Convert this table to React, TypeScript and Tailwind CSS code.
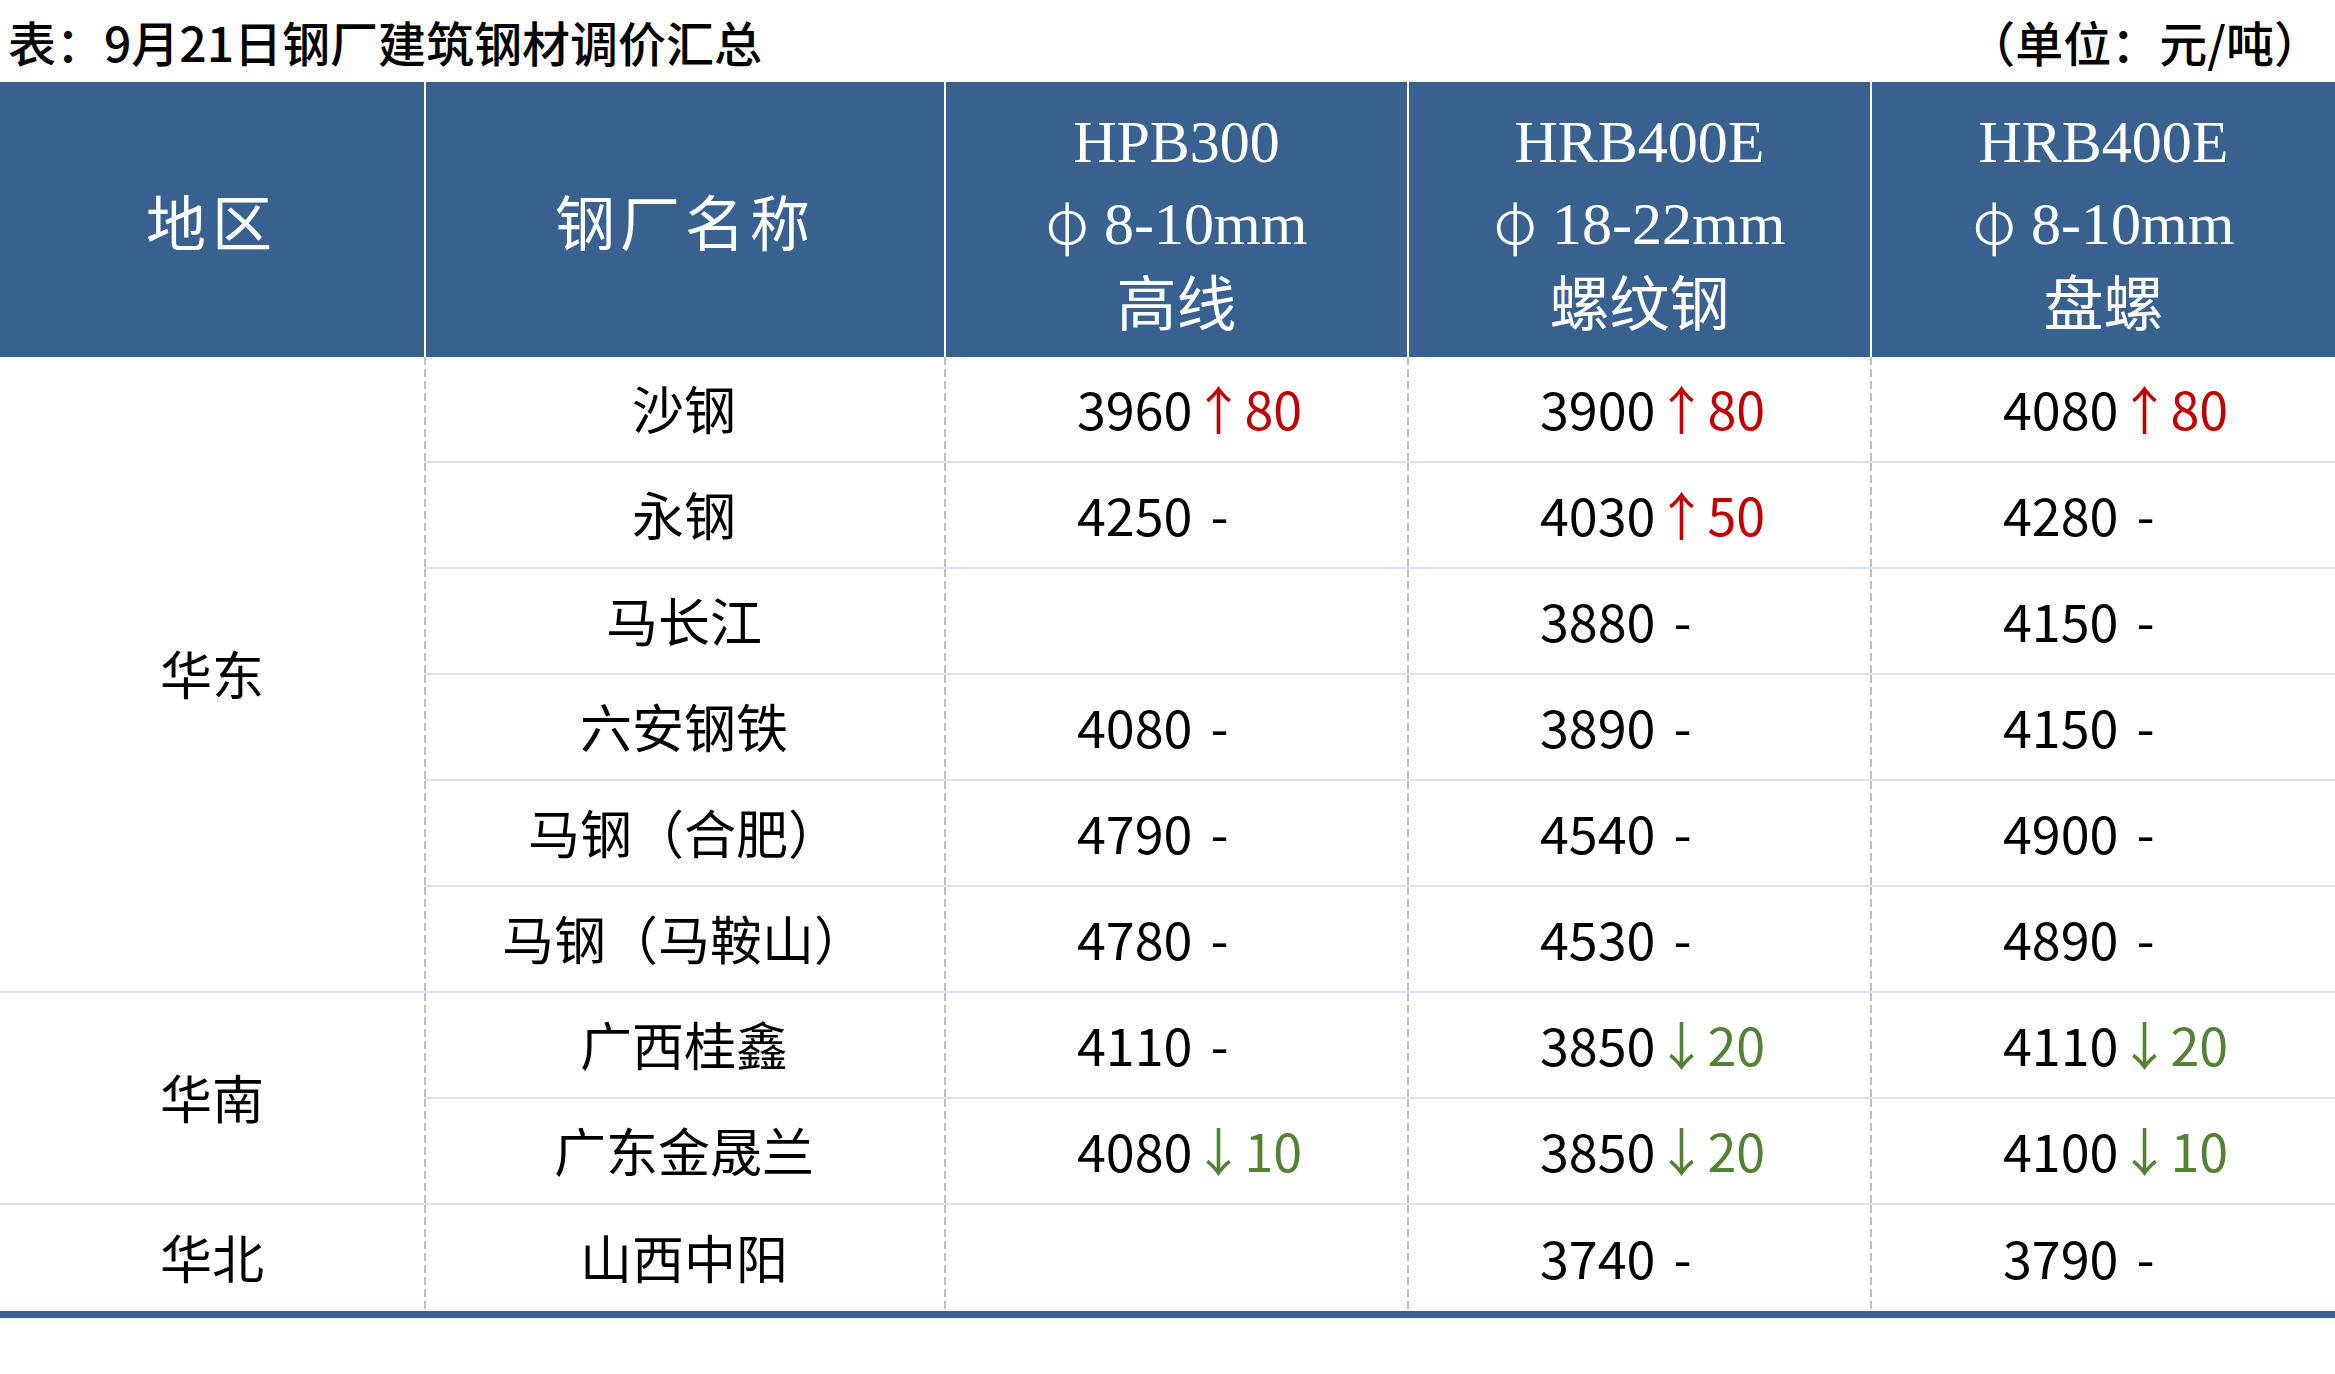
import React from 'react';

type Val = { p: string; d?: string } | null;

const groups: { region: string; rows: { name: string; vals: Val[] }[] }[] = [
  {
    region: '华东',
    rows: [
      { name: '沙钢', vals: [{ p: '3960', d: '↑80' }, { p: '3900', d: '↑80' }, { p: '4080', d: '↑80' }] },
      { name: '永钢', vals: [{ p: '4250' }, { p: '4030', d: '↑50' }, { p: '4280' }] },
      { name: '马长江', vals: [null, { p: '3880' }, { p: '4150' }] },
      { name: '六安钢铁', vals: [{ p: '4080' }, { p: '3890' }, { p: '4150' }] },
      { name: '马钢（合肥）', vals: [{ p: '4790' }, { p: '4540' }, { p: '4900' }] },
      { name: '马钢（马鞍山）', vals: [{ p: '4780' }, { p: '4530' }, { p: '4890' }] },
    ],
  },
  {
    region: '华南',
    rows: [
      { name: '广西桂鑫', vals: [{ p: '4110' }, { p: '3850', d: '↓20' }, { p: '4110', d: '↓20' }] },
      { name: '广东金晟兰', vals: [{ p: '4080', d: '↓10' }, { p: '3850', d: '↓20' }, { p: '4100', d: '↓10' }] },
    ],
  },
  {
    region: '华北',
    rows: [{ name: '山西中阳', vals: [null, { p: '3740' }, { p: '3790' }] }],
  },
];

const headers = [
  ['HPB300', '8-10mm', '高线'],
  ['HRB400E', '18-22mm', '螺纹钢'],
  ['HRB400E', '8-10mm', '盘螺'],
];

const dashed =
  'bg-[image:repeating-linear-gradient(to_bottom,#c0c0c0_0px,#c0c0c0_8px,transparent_8px,transparent_12px)] bg-[length:2px_100%] bg-no-repeat bg-left';

const App = () => {
  const lastGroup = groups.length - 1;

  return (
    <div className="w-[2335px] min-h-[1374px] bg-white font-['Noto_Sans_CJK_SC',sans-serif] text-black">
      {/* title */}
      <div className="flex h-[82px] items-center justify-between pl-2 pr-[13px] text-[48px] font-medium leading-none">
        <span>表：9月21日钢厂建筑钢材调价汇总</span>
        <span>（单位：元/吨）</span>
      </div>

      <div className="grid grid-cols-[424px_520px_463px_463px_1fr] grid-rows-[275px] auto-rows-[106px]">
        {/* header */}
        <div className="flex items-center justify-center bg-[#386190] pt-3 font-['Liberation_Serif','Noto_Sans_CJK_SC',serif] text-[60px] tracking-[6px] text-white">
          地区
        </div>
        <div className="flex items-center justify-center border-l-2 border-white bg-[#386190] pt-3 font-['Liberation_Serif','Noto_Sans_CJK_SC',serif] text-[60px] tracking-[5px] text-white">
          钢厂名称
        </div>
        {headers.map((h, i) => (
          <div
            key={i}
            className="flex flex-col items-center justify-center border-l-2 border-white bg-[#386190] pt-2 font-['Liberation_Serif','Noto_Sans_CJK_SC',serif] text-[60px] leading-[82px] text-white"
          >
            <span>{h[0]}</span>
            <span className="whitespace-pre">
              <span className="font-['Noto_Sans_CJK_SC',sans-serif] font-light leading-none">φ</span> {h[1]}
            </span>
            <span>{h[2]}</span>
          </div>
        ))}

        {/* body */}
        {groups.map((g, gi) => (
          <React.Fragment key={g.region}>
            <div
              className={`flex items-center justify-center pb-[2px] text-[52px] leading-none ${
                gi === lastGroup ? '' : 'border-b-2 border-[#dce6f1]'
              } ${g.rows.length === 6 ? 'row-span-6' : g.rows.length === 2 ? 'row-span-2' : 'row-span-1'}`}
            >
              {g.region}
            </div>
            {g.rows.map((r, ri) => {
              const last = gi === lastGroup && ri === g.rows.length - 1;
              const line = last ? '' : 'border-b-2 border-[#dce6f1]';
              return (
                <React.Fragment key={r.name}>
                  <div className={`flex items-center justify-center pb-[3px] text-[52px] leading-none ${dashed} ${line}`}>
                    {r.name}
                  </div>
                  {r.vals.map((v, vi) => (
                    <div
                      key={vi}
                      className={`flex items-center pb-[3px] pl-[133px] text-[52px] leading-none ${dashed} ${line}`}
                    >
                      {v && (
                        <>
                          <span>{v.p}</span>
                          {v.d ? (
                            <span className={v.d.startsWith('↑') ? 'text-[#c00000]' : 'text-[#538135]'}>{v.d}</span>
                          ) : (
                            <span className="ml-[18px]">-</span>
                          )}
                        </>
                      )}
                    </div>
                  ))}
                </React.Fragment>
              );
            })}
          </React.Fragment>
        ))}
      </div>
      <div className="h-[7px] bg-[#386190]" />
    </div>
  );
};

export default App;
